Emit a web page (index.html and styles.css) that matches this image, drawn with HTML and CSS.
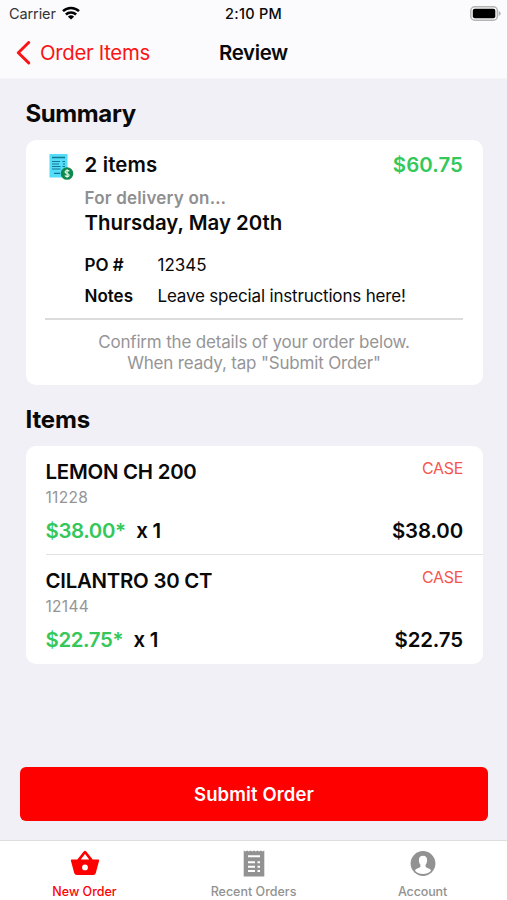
FILE: index.html
```html
<!DOCTYPE html>
<html lang="en">
<head>
<meta charset="utf-8">
<title>Review</title>
<link rel="stylesheet" href="styles.css">
</head>
<body>
<div class="screen">
  <header class="top">
    <div class="status">
      <div class="carrier"><span>Carrier</span>
        <svg class="wifi" width="18" height="14" viewBox="0 0 18 14"><g fill="none" stroke="#000" stroke-width="2.5"><path d="M1 5.2A11.5 11.5 0 0 1 17 5.2"/><path d="M3.900 8.500A7.300 7.300 0 0 1 14.100 8.500"/></g><path d="M9 13.600L5.900 10.700A4.500 4.500 0 0 1 12.100 10.700Z"/></svg>
      </div>
      <div class="time">2:10 PM</div>
      <svg class="battery" width="31" height="15" viewBox="0 0 31 15"><rect x=".8" y=".8" width="26.6" height="13.4" rx="4" fill="#fafafa" stroke="#b4b4b4" stroke-width="1.5"/><rect x="2.8" y="2.7" width="22.5" height="9.6" rx="2"/><path d="M28.7 5q2 .7 2 2.5t-2 2.5z" fill="#b4b4b4"/></svg>
    </div>
    <nav class="nav">
      <a class="back"><svg width="15" height="24" viewBox="0 0 15 24"><path d="M12.700 1.500L2.300 11.700L12.700 21.900" fill="none" stroke="#fa1414" stroke-width="2.900" stroke-linecap="round" stroke-linejoin="round"/></svg><span>Order Items</span></a>
      <div class="title">Review</div>
    </nav>
  </header>
  <main class="content">
    <h2>Summary</h2>
    <section class="card summary">
      <div class="head">
        <svg class="invoice" width="26" height="28" viewBox="0 0 26 28"><rect x="1.500" y="1" width="18" height="23.500" fill="#55dcf8"/><g stroke="#117894" fill="none"><path stroke-width="1.500" d="M4 4.500H17"/><path stroke-width="1.200" d="M4 8.500H12M4 11H11M4 13.500H12.500M4 16H12.500M14.500 8.500H17M15 11H17M14.500 13.500H17M6 20.300H12"/></g><circle cx="19" cy="20.500" r="6.300" fill="#10894c"/><path d="M21.200 18.300C20.500 17.200 17.200 17 17.100 19C17 21 21.200 20 21.100 22.200C21 24 17.700 24 16.900 22.500M19.100 16.200V24.800" fill="none" stroke="#e4f8e9" stroke-width="1.200"/></svg>
        <strong class="count">2 items</strong>
        <strong class="total">$60.75</strong>
      </div>
      <div class="details">
        <div class="for">For delivery on…</div>
        <div class="date">Thursday, May 20th</div>
        <dl>
          <dt>PO #</dt><dd>12345</dd>
          <dt>Notes</dt><dd class="note">Leave special instructions here!</dd>
        </dl>
      </div>
      <p class="confirm">Confirm the details of your order below.<br>When ready, tap "Submit Order"</p>
    </section>
    <h2 class="h-items">Items</h2>
    <section class="card items">
      <article class="item">
        <div class="row"><span class="name">LEMON CH 200</span><span class="unit">CASE</span></div>
        <div class="sku">11228</div>
        <div class="row prices"><span><span class="price">$38.00*</span><span class="qty">x 1</span></span><span class="sum">$38.00</span></div>
      </article>
      <article class="item">
        <div class="row"><span class="name">CILANTRO 30 CT</span><span class="unit">CASE</span></div>
        <div class="sku">12144</div>
        <div class="row prices"><span><span class="price">$22.75*</span><span class="qty">x 1</span></span><span class="sum">$22.75</span></div>
      </article>
    </section>
  </main>
  <button class="submit">Submit Order</button>
  <footer class="tabs">
    <div class="tab active"><svg width="30" height="26" viewBox="0 0 30 26"><path fill="#f00" fill-rule="evenodd" d="M1.700 9H7.300L13.700 .9Q15 -.6 16.300 .9L22.700 9H28.300Q29.400 9 29.100 10.200L25.800 22.500Q25.200 24.500 23.200 24.500H6.800Q4.800 24.500 4.200 22.500L.9 10.200Q.6 9 1.700 9ZM10.800 9H19.200L15 3.600ZM15 14A2.900 2.900 0 1 0 15 19.800A2.900 2.900 0 1 0 15 14Z"/></svg><span>New Order</span></div>
    <div class="tab recent"><svg width="22" height="27" viewBox="0 0 22 27"><path fill="#929292" d="M.7 .5L2.400 1.500L4.100 .5L5.800 1.500L7.500 .5L9.200 1.500L11 .5L12.700 1.500L14.400 .5L16.100 1.500L17.800 .5L19.500 1.500L21.300 .5V26.500H.7Z"/><path fill="none" stroke="#fff" stroke-width="2" d="M5 6.300H17M5 12.300H12M14.500 12.300H17M5 16.700H12M14.500 16.700H17M5 21H12M14.500 21H17"/></svg><span>Recent Orders</span></div>
    <div class="tab account"><svg width="26" height="26" viewBox="0 0 26 26"><circle cx="13" cy="13" r="12.400" fill="#929292"/><path fill="#fff" d="M13 5.200C15.800 5.200 17.300 7.200 17.100 10C17 12 16.400 13.300 15.600 14.200C15.300 16.300 15.800 16.800 17.500 17.500C19.300 18.100 20.700 18.800 21 20.200Q17.800 23.500 13 23.500T5 20.200C5.300 18.800 6.700 18.100 8.500 17.500C10.200 16.800 10.700 16.300 10.400 14.200C9.600 13.300 9 12 8.900 10C8.700 7.200 10.200 5.200 13 5.200Z"/></svg><span>Account</span></div>
  </footer>
</div>
</body>
</html>
```

FILE: styles.css
```css
* { box-sizing: border-box; }
body { margin: 0; font-family: Inter, "Liberation Sans", sans-serif; color: #090909; }
.screen { width: 507px; height: 900px; display: flex; flex-direction: column; background: #f1f0f6; overflow: hidden; }
.top { height: 79px; background: #fbfbfd; border-bottom: 1px solid #f6f6f9; }
.status { height: 28px; display: grid; grid-template-columns: 1fr auto 1fr; align-items: center; padding: 0 8px 0 9px; font-size: 14.500px; line-height: 28px; }
.carrier { display: flex; align-items: center; gap: 6px; color: #333; letter-spacing: -.1px; }
.wifi { margin-top: -2px; }
.time { font-weight: 500; letter-spacing: .25px; margin-left: -1px; }
.battery { justify-self: end; margin: -2px -2px 0 0; }
.nav { height: 50px; display: grid; grid-template-columns: 1fr auto 1fr; align-items: center; padding: 0 16px; font-size: 20.400px; line-height: 48px; }
.back { display: flex; align-items: center; gap: 9px; color: #fa1414; letter-spacing: -.33px; }
.title { font-weight: 600; letter-spacing: -.35px; }
.content { flex: 1; padding: 19px 24.500px 0 25.500px; }
h2 { margin: 0; font-size: 24px; line-height: 32px; font-weight: 700; letter-spacing: -.4px; }
.card { background: #fff; border-radius: 10px; }
.summary { height: 245px; margin-top: 10px; padding: 11px 19.500px 0; }
.head { display: flex; align-items: center; height: 28px; font-size: 20.400px; line-height: 28px; }
.invoice { margin: 3px 10.500px 0 3px; }
.count, .total, .date { font-weight: 600; }
.count { letter-spacing: .15px; }
.total { margin-left: auto; color: #34c759; letter-spacing: .1px; }
.details { padding-left: 39.500px; }
.for { margin-top: 7px; font-size: 17px; line-height: 24px; font-weight: 600; color: #8f8f91; letter-spacing: .2px; }
.date { font-size: 20.400px; line-height: 26px; }
dl { margin: 17px 0 0; display: grid; grid-template-columns: 73px 1fr; row-gap: 7px; font-size: 17px; line-height: 24px; }
dt { font-weight: 600; }
dd { margin: 0; }
.note { letter-spacing: -.18px; }
.confirm { margin: 10px 0 0; border-top: 2px solid #dcdcdd; padding-top: 12px; text-align: center; font-size: 17px; line-height: 20.500px; color: #959597; letter-spacing: -.18px; }
.h-items { margin-top: 19px; letter-spacing: -.15px; }
.items { height: 218px; margin-top: 10px; padding-left: 20px; }
.item { height: 108px; padding: 12px 19.500px 0 0; }
.item + .item { border-top: 1px solid #e3e3e5; }
.row { display: flex; justify-content: space-between; height: 28px; line-height: 28px; font-size: 20.400px; }
.name, .qty, .sum, .price { font-weight: 570; }
.name { letter-spacing: -.24px; }
.unit { color: #f5564f; font-size: 16px; line-height: 20px; letter-spacing: -.35px; }
.sku { margin-top: 1px; font-size: 15.500px; line-height: 22px; color: #959597; letter-spacing: .3px; }
.prices { margin-top: 8px; }
.price { color: #34c759; margin-right: 10.500px; letter-spacing: -.36px; }
.qty { letter-spacing: -.2px; }
.sum { letter-spacing: -.1px; }
.submit { margin: 0 19px 19px 20px; height: 54px; flex: none; border: 0; border-radius: 6px; background: #f00; color: #fff; font: 600 18.500px/54px Inter, "Liberation Sans", sans-serif; letter-spacing: .12px; padding: 0; }
.tabs { height: 60px; flex: none; display: grid; grid-template-columns: repeat(3, 1fr); border-top: 1px solid #dededf; background: #fff; }
.tab { display: flex; flex-direction: column; align-items: center; color: #929292; font-size: 12.500px; font-weight: 500; line-height: 16px; }
.tab svg { height: 27px; margin-top: 9px; }
.tab span { margin-top: 6.500px; }
.account { letter-spacing: -.15px; }
.active { color: #f00; }
```
